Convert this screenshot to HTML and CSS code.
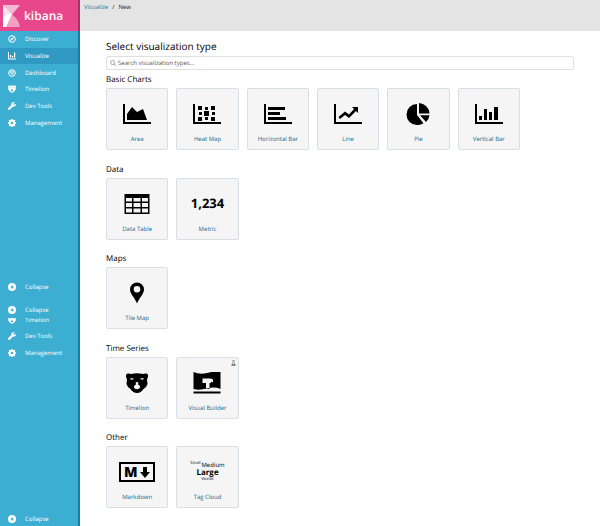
FILE: index.html
```html
<!DOCTYPE html>
<html lang="en">
<head>
<meta charset="utf-8">
<meta name="viewport" content="width=device-width, initial-scale=1">
<title>Kibana</title>
<link rel="stylesheet" href="styles.css">
</head>
<body>
<svg class="sprite" aria-hidden="true">
  <symbol id="compass" viewBox="0 0 16 16"><circle cx="8" cy="8" r="6.7" fill="none" stroke="currentColor" stroke-width="2"/><path d="M12 4 9.8 9.5 4 12 6.3 6.5Z" fill="currentColor"/><circle cx="8" cy="8" r="1" fill="#3caed2"/></symbol>
  <symbol id="bars" viewBox="0 0 16 16"><path d="M0 0h2v13h14v2H0zM4 6h2.5v5H4zM8 8h2.5v3H8zM12 1h2.5v10H12z" fill="currentColor"/></symbol>
  <symbol id="gauge" viewBox="0 0 16 16"><circle cx="8" cy="8" r="6.7" fill="none" stroke="currentColor" stroke-width="2"/><path d="M4 9a4 4 0 0 1 8-1M5 5l4 4" fill="none" stroke="currentColor" stroke-width="1.6"/><circle cx="9" cy="9.5" r="2" fill="currentColor"/></symbol>
  <symbol id="lion" viewBox="0 0 22 20"><path fill-rule="evenodd" d="M0 1.800C1 .2 3 0 5 1Q11-.5 17 1C19 0 21 .2 22 1.800Q22.400 4.500 21 6L21.500 11Q20.500 14.500 17.500 16Q15 20 11 20T4.500 16Q1.500 14.500 .5 11L1 6Q-.4 4.500 0 1.800ZM4.500 5v1.500h3V5.500ZM14.500 5.500v1h3V5ZM9.400 9.500Q11 8.700 12.600 9.500L11.800 11.300Q14.500 12.500 14 14.500Q13.500 16.300 11 16.300T8 14.500Q7.500 12.500 10.200 11.300Z" fill="currentColor"/></symbol>
  <symbol id="wrench" viewBox="0 0 16 16"><path d="M15.500 4.200 12.600 5.800 10.400 4.500V2.800L13 .8C9.500-.5 6.500 2 7.300 5.900L.8 12.200a2 2 0 0 0 2.900 2.900L10 8.700c3.400.9 6.200-1.300 5.500-4.500Z" fill="currentColor" stroke="currentColor" stroke-width=".8"/></symbol>
  <symbol id="gear" viewBox="0 0 16 16"><circle cx="8" cy="8" r="4.400" fill="none" stroke="currentColor" stroke-width="4"/><path d="M8 0v3M8 13v3M0 8h3M13 8h3M2.300 2.300l2.200 2.200M11.500 11.500l2.200 2.200M2.300 13.700l2.200-2.200M11.500 4.500l2.200-2.200" stroke="currentColor" stroke-width="3"/></symbol>
  <symbol id="collapse" viewBox="0 0 16 16"><path fill-rule="evenodd" d="M8 0a8 8 0 1 0 0 16A8 8 0 0 0 8 0Zm2.500 4.200v7.600L4.800 8Z" fill="currentColor"/></symbol>
</svg>

<div class="app">
  <aside class="sidebar">
    <a class="brand" href="#">
      <svg class="brand-mark" viewBox="0 0 17 22" aria-hidden="true"><path d="M0 0H17L9 9.500 0 20Z" fill="#f6b9d4"/><path d="M0 0 9 9.500 0 20Z" fill="#fbe3ee"/><path d="M0 22V20L9 9.500Q15 13.500 17 22Z" fill="#f3a0c5"/><path d="M0 22V13Q5 8 9 9.500L3 22Z" fill="#fff"/></svg>
      <span>kibana</span>
    </a>
    <nav class="nav">
      <a class="nav-item" href="#"><svg><use href="#compass"/></svg>Discover</a>
      <a class="nav-item active" href="#"><svg><use href="#bars"/></svg>Visualize</a>
      <a class="nav-item" href="#"><svg><use href="#gauge"/></svg>Dashboard</a>
      <a class="nav-item" href="#"><svg><use href="#lion"/></svg>Timelion</a>
      <a class="nav-item" href="#"><svg><use href="#wrench"/></svg>Dev Tools</a>
      <a class="nav-item" href="#"><svg><use href="#gear"/></svg>Management</a>
    </nav>
    <div class="collapse-group">
      <button class="nav-item" type="button"><svg><use href="#collapse"/></svg>Collapse</button>
      <button class="nav-item" type="button"><svg><use href="#collapse"/></svg>Collapse</button>
    </div>
    <nav class="nav-repeat">
      <div class="clipped"><a class="nav-item" href="#"><svg><use href="#lion"/></svg>Timelion</a></div>
      <a class="nav-item" href="#"><svg><use href="#wrench"/></svg>Dev Tools</a>
      <a class="nav-item" href="#"><svg><use href="#gear"/></svg>Management</a>
    </nav>
    <button class="nav-item last" type="button"><svg><use href="#collapse"/></svg>Collapse</button>
  </aside>

  <div class="content">
    <header class="topbar"><a href="#">Visualize</a><span>/</span><span>New</span></header>
    <main class="main">
      <h1>Select visualization type</h1>
      <label class="search">
        <svg viewBox="0 0 12 12" aria-hidden="true"><circle cx="5" cy="5" r="4" fill="none" stroke="#777" stroke-width="1.300"/><path d="m8 8 3.500 3.500" stroke="#777" stroke-width="1.500"/></svg>
        <input type="text" aria-label="Search visualization types" placeholder="Search visualization types...">
      </label>
      <div class="groups">
        <section>
          <h2>Basic Charts</h2>
          <div class="cards">
            <a class="card" href="#"><svg class="art" viewBox="0 0 28 22"><path d="M0 1h2v18h26v2H0zM4 17V11L9 4l5 5 6-3 4 11Z"/></svg>Area</a>
            <a class="card" href="#"><svg class="art" viewBox="0 0 28 22"><path d="M0 1h2v18h26v2H0zM5 3h4v4H5zM12 4h3v3h-3zM18 3h4v4h-4zM6 9h3v3H6zM11 8h5v5h-5zM19 9h3v3h-3zM5 14h4v4H5zM12 14h3v3h-3zM18 14h4v4h-4z"/></svg>Heat Map</a>
            <a class="card" href="#"><svg class="art" viewBox="0 0 28 22"><path d="M0 1h2v18h26v2H0zM4 4h17v3H4zM4 9h12v3H4zM4 14h18v3H4z"/></svg>Horizontal Bar</a>
            <a class="card" href="#"><svg class="art" viewBox="0 0 28 22"><path d="M0 1h2v18h26v2H0zM18 4h6v6l-2-2-7 7-4-3-5 4-1.500-2L11 8.500l4 3L20 6Z"/></svg>Line</a>
            <a class="card" href="#"><svg class="art" viewBox="0 0 28 22"><path d="M13 1v11L19.500 20.200A10.700 10.700 0 0 1 13 22A10.500 10.500 0 0 1 13 1ZM15 0A11 11 0 0 1 25.500 10.500H15ZM16 12.200h9.500q-.5 4-3.500 6.800Z"/></svg>Pie</a>
            <a class="card" href="#"><svg class="art" viewBox="0 0 28 22"><path d="M0 1h2v18h26v2H0zM4 13h3v4H4zM9 6h3v11H9zM14 9h3v8h-3zM19 4h4v13h-4z"/></svg>Vertical Bar</a>
          </div>
        </section>
        <section>
          <h2>Data</h2>
          <div class="cards">
            <a class="card" href="#"><svg class="art" viewBox="0 0 28 22"><path fill-rule="evenodd" d="M1.500 1h25v20h-25zM3 5v3.500h6V5zM10.500 5v3.500h7V5zM19 5v3.500h6V5zM3 10v4h6v-4zM10.500 10v4h7v-4zM19 10v4h6v-4zM3 15.500v4h6v-4zM10.500 15.500v4h7v-4zM19 15.500v4h6v-4z"/></svg>Data Table</a>
            <a class="card" href="#"><span class="art metric">1,234</span>Metric</a>
          </div>
        </section>
        <section>
          <h2>Maps</h2>
          <div class="cards">
            <a class="card" href="#"><svg class="art" viewBox="0 0 28 22"><path fill-rule="evenodd" d="M14 .5a7 7 0 0 0-7 7C7 12 12 16 14 21.500 16 16 21 12 21 7.500a7 7 0 0 0-7-7Zm0 3.500a3.300 3.300 0 1 1 0 6.600A3.300 3.300 0 0 1 14 4Z"/></svg>Tile Map</a>
          </div>
        </section>
        <section>
          <h2>Time Series</h2>
          <div class="cards">
            <a class="card" href="#"><svg class="art lion-art"><use href="#lion"/></svg>Timelion</a>
            <a class="card" href="#"><svg class="art" viewBox="0 0 28 22"><path fill-rule="evenodd" d="M.5 0Q7 3 14 1T27.500 0V17Q22 14.500 14 16.500T.5 17ZM9.500 6.500V11h3.500v6h3.500V11h1.500V9.500l2 1V7.500Q18 6 16 6.500ZM.5 19.500h27v2H.5z"/></svg>Visual Builder
              <svg class="flask" viewBox="0 0 10 12" role="img" aria-label="Experimental"><path d="M3 1h4M4 1v4L1 11h8L6 5V1" fill="none" stroke="#777" stroke-width="1.200"/><path d="M2.500 8h5L9 11H1Z" fill="#777"/></svg>
            </a>
          </div>
        </section>
        <section>
          <h2>Other</h2>
          <div class="cards">
            <a class="card" href="#"><svg class="art wide" viewBox="0 0 36 22"><path d="M1 2h34v18H1z" fill="none" stroke="#000" stroke-width="2"/><text x="5" y="16" class="md">M</text><path d="M24 6h4v5h3l-5 6-5-6h3Z"/></svg>Markdown</a>
            <a class="card" href="#"><span class="art cloud"><span class="line"><small>Small</small><span>Medium</span></span><b>Large</b><small class="words">Words</small></span>Tag Cloud</a>
          </div>
        </section>
      </div>
    </main>
  </div>
</div>
</body>
</html>
```

FILE: styles.css
```css
* { box-sizing: border-box; }
body { margin: 0; font-family: "Open Sans", sans-serif; text-rendering: geometricPrecision; color: #222; background: #fff; }
a { color: inherit; text-decoration: none; }
.sprite { display: none; }
.app { display: flex; min-height: 100vh; }

.sidebar {
  flex: none;
  display: flex;
  flex-direction: column;
  width: 80px;
  background: #3caed2;
  border-right: 2px solid #1580a4;
  color: #fff;
}
.brand {
  display: flex;
  align-items: center;
  gap: 4px;
  height: 31px;
  padding-left: 3px;
  background: #e8488b;
  font-size: 12px;
  line-height: 18px;
  font-weight: 600;
  margin-right: -2px;
  border-right: 2px solid #a83268;
}
.brand-mark { width: 17px; height: 22px; }
.nav { display: grid; grid-template-rows: repeat(6, 1fr); height: 100px; }
.nav-item {
  display: flex;
  align-items: center;
  gap: 9px;
  width: 100%;
  min-height: 16px;
  padding: 0 0 0 8px;
  border: 0;
  background: none;
  color: #fff;
  font: 400 6px/8px "Open Sans", sans-serif;
  text-rendering: inherit;
  text-align: left;
}
.nav-item svg { flex: none; width: 8px; height: 8px; }
.active { background: #2f99c3; }
.collapse-group { display: flex; flex-direction: column; gap: 7px; margin-top: 148px; }
.nav-repeat .nav-item { height: 17px; }
.clipped { display: flex; align-items: flex-end; height: 10px; margin-bottom: -1px; overflow: hidden; }
.clipped .nav-item { flex: none; }
.last { margin-top: auto; height: 18px; }

.content { flex: 1; min-width: 0; }
.topbar {
  display: flex;
  gap: 4px;
  height: 31px;
  padding: 3px 4px;
  background: #e4e4e4;
  font-size: 6px;
  line-height: 8px;
  color: #222;
}
.topbar a { color: #1d79a2; }
.main { padding: 8px 26px; }
h1, h2 { margin: 0; font-weight: 400; color: #000; }
h1 { font-size: 10px; line-height: 14px; }
.search {
  display: flex;
  align-items: center;
  gap: 2px;
  height: 14px;
  margin: 3px 0 2px;
  padding: 0 3px;
  border: 1px solid #e0e0e0;
  border-radius: 2px;
}
.search svg { width: 6px; height: 6px; }
.search input {
  flex: 1;
  min-width: 0;
  padding: 0;
  border: 0;
  outline: 0;
  background: none;
  font: 6px/10px "Open Sans", sans-serif;
  text-rendering: inherit;
}
.search input::placeholder { color: #555; opacity: 1; }
.groups { display: grid; grid-template-rows: repeat(5, 1fr); min-height: 448px; }
h2 { font-size: 8px; line-height: 16px; }
.cards { display: grid; grid-template-columns: repeat(6, 1fr); gap: 8px; max-width: 414px; }
.card {
  position: relative;
  display: flex;
  flex-direction: column;
  align-items: center;
  gap: 9px;
  height: 62px;
  padding-top: 14px;
  background: #f5f5f5;
  border: 1px solid #d9dfe8;
  border-radius: 2px;
  font-size: 6px;
  line-height: 10px;
  color: #0f6d97;
  white-space: nowrap;
}
.art { flex: none; width: 28px; height: 22px; color: #000; fill: #000; }
.lion-art { width: 22px; }
.wide { width: 36px; }
.md { font: 800 14px "Open Sans", sans-serif; }
.metric { width: auto; font-size: 13px; line-height: 20px; font-weight: 700; }
.cloud { display: flex; flex-direction: column; align-items: center; width: auto; font-size: 6px; line-height: 8px; }
.cloud .line { display: flex; gap: 1px; }
.cloud b { font-size: 8px; line-height: 8px; }
.cloud small { font-size: 4px; line-height: 6px; }
.flask { position: absolute; top: 2px; right: 2px; width: 5px; height: 6px; }
```
